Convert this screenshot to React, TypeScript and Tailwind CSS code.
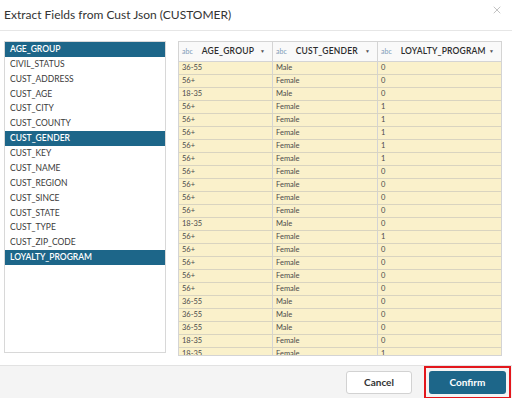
import { X } from 'lucide-react'

const FIELDS = [
  'AGE_GROUP',
  'CIVIL_STATUS',
  'CUST_ADDRESS',
  'CUST_AGE',
  'CUST_CITY',
  'CUST_COUNTY',
  'CUST_GENDER',
  'CUST_KEY',
  'CUST_NAME',
  'CUST_REGION',
  'CUST_SINCE',
  'CUST_STATE',
  'CUST_TYPE',
  'CUST_ZIP_CODE',
  'LOYALTY_PROGRAM',
]

const SELECTED = ['AGE_GROUP', 'CUST_GENDER', 'LOYALTY_PROGRAM']

const ROWS: [string, string, string][] = [
  ['36-55', 'Male', '0'],
  ['56+', 'Female', '0'],
  ['18-35', 'Male', '0'],
  ['56+', 'Female', '1'],
  ['56+', 'Female', '1'],
  ['56+', 'Female', '1'],
  ['56+', 'Female', '1'],
  ['56+', 'Female', '1'],
  ['56+', 'Female', '0'],
  ['56+', 'Female', '0'],
  ['56+', 'Female', '0'],
  ['56+', 'Female', '0'],
  ['18-35', 'Male', '0'],
  ['56+', 'Female', '1'],
  ['56+', 'Female', '0'],
  ['56+', 'Female', '0'],
  ['56+', 'Female', '0'],
  ['56+', 'Female', '0'],
  ['36-55', 'Male', '0'],
  ['36-55', 'Male', '0'],
  ['36-55', 'Male', '0'],
  ['18-35', 'Female', '0'],
  ['18-35', 'Female', '1'],
  ['56+', 'Female', '0'],
]

const COLS = [
  { name: 'AGE_GROUP', w: 'w-[94px]' },
  { name: 'CUST_GENDER', w: 'w-[105px]' },
  { name: 'LOYALTY_PROGRAM', w: 'flex-1' },
]

function HeaderCell({ name, w }: { name: string; w: string }) {
  return (
    <div className={`${w} flex h-full items-center border-r border-[#d4d4d4] pl-[3px] pr-[7px] last:border-r-0`}>
      <span className="text-[7px] text-[#7d9bb8]">abc</span>
      <span className="ml-[9px] text-[8.5px] font-semibold tracking-[0.2px] text-[#2b2b2b]">{name}</span>
      <span className="ml-auto text-[5px] text-[#555]">▼</span>
    </div>
  )
}

export default function App() {
  return (
    <div className="flex h-[398px] w-[512px] flex-col overflow-hidden bg-white font-['Lato',sans-serif]">
      <div className="flex h-[31px] shrink-0 items-center border-b border-[#e6e6e6] pl-[4px] pr-[9px]">
        <h1 className="text-[12px] text-[#333]">Extract Fields from Cust Json (CUSTOMER)</h1>
        <X className="ml-auto -mt-[11px] h-[12px] w-[12px] text-[#999]" strokeWidth={1.2} />
      </div>

      <div className="flex min-h-0 flex-1 gap-[12px] pl-[4px] pr-[10px] pt-[10px]">
        <div className="h-[312px] w-[162px] shrink-0 border border-[#d8d8d8]">
          {FIELDS.map((f) => {
            const sel = SELECTED.includes(f)
            return (
              <div
                key={f}
                className={`flex h-[14.86px] items-center px-[5px] text-[8.5px] ${
                  sel ? 'bg-[#1d6689] font-semibold text-white' : 'text-[#3a3a3a]'
                }`}
              >
                {f}
              </div>
            )
          })}
        </div>

        <div className="h-[315px] flex-1 overflow-hidden border border-[#d4d4d4]">
          <div className="flex h-[20px] border-b border-[#d4d4d4] bg-[#f9f9f9]">
            {COLS.map((c) => (
              <HeaderCell key={c.name} name={c.name} w={c.w} />
            ))}
          </div>
          {ROWS.map((r, i) => (
            <div key={i} className="flex h-[13px] border-b border-[#d9d4c0] bg-[#faf1cb] text-[7.5px] text-[#4a4a4a]">
              {r.map((v, j) => (
                <div
                  key={j}
                  className={`${COLS[j].w} flex items-center border-r border-[#d4d4d4] pl-[3px] last:border-r-0`}
                >
                  {v}
                </div>
              ))}
            </div>
          ))}
        </div>
      </div>

      <div className="flex h-[33px] shrink-0 items-center justify-end border-t border-[#e2e2e2] bg-[#f4f4f4] pr-[1px]">
        <button className="mr-[12px] h-[23px] w-[66px] rounded-[3px] border border-[#d2d2d2] bg-white text-[10px] font-bold text-[#333]">
          Cancel
        </button>
        <div className="flex h-[33px] w-[87px] items-center justify-center border-2 border-[#e3161b]">
          <button className="h-[23px] w-[77px] rounded-[3px] bg-[#1d6689] text-[10px] font-bold text-white">
            Confirm
          </button>
        </div>
      </div>
    </div>
  )
}
